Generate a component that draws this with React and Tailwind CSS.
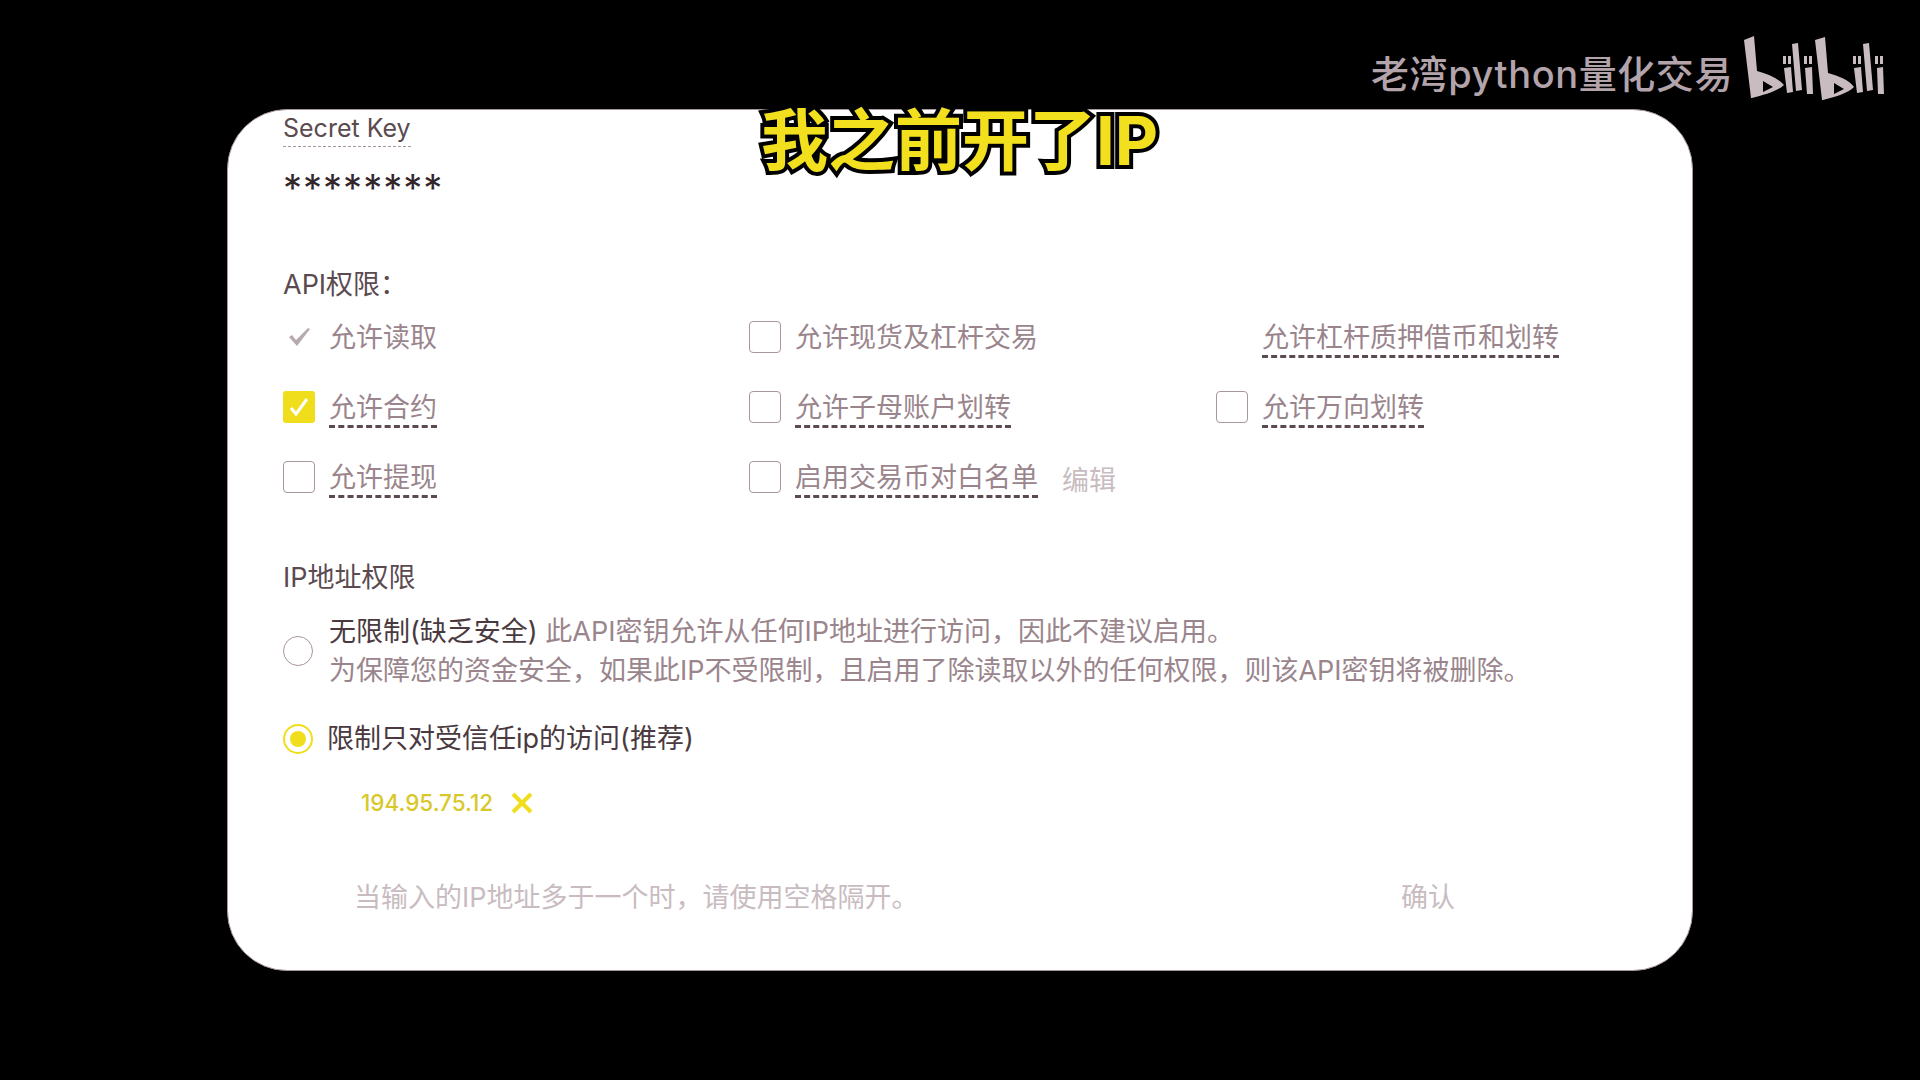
const CJK = 'font-["Inter","Noto_Sans_CJK_SC",sans-serif]';

const ROWS = [
  [
    { label: '允许读取', mark: 'tick', plain: true },
    { label: '允许现货及杠杆交易', plain: true },
    { label: '允许杠杆质押借币和划转', mark: 'none' },
  ],
  [
    { label: '允许合约', mark: 'on' },
    { label: '允许子母账户划转' },
    { label: '允许万向划转' },
  ],
  [
    { label: '允许提现' },
    { label: '启用交易币对白名单', edit: true },
  ],
];

function Mark({ mark }) {
  if (mark === 'none') return <span className="w-8 h-8 shrink-0" />;
  if (mark === 'tick') {
    return (
      <span className="w-8 h-8 shrink-0 flex items-center justify-center">
        <svg width="24" height="20" viewBox="0 0 24 20" fill="#b8a9ae">
          <path d="M2 10L5 8L9 13L21 1L23 2L10 19Z" />
        </svg>
      </span>
    );
  }
  if (mark === 'on') {
    return (
      <span className="w-8 h-8 shrink-0 rounded-[3px] bg-[#f0de1c] flex items-center justify-center">
        <svg width="20" height="20" viewBox="0 0 20 20" fill="none" stroke="#ffffff" strokeWidth="3">
          <path d="M2 11l5 6L18 2" />
        </svg>
      </span>
    );
  }
  return <span className="w-8 h-8 shrink-0 rounded-[4px] border border-[#a8969d]" />;
}

function Perm({ label, mark, plain, edit }) {
  return (
    <div className="flex items-start gap-[14px]">
      <div className="flex mt-[1px]">
        <Mark mark={mark} />
      </div>
      <span className={`mt-[1px] leading-[34px] text-[#9a858d] border-b-[3px] border-dashed ${plain ? 'border-transparent' : 'border-[#5b4a50]'}`}>
        {label}
      </span>
      {edit && <span className="ml-[10px] mt-[3px] leading-[36px] text-[#c9bcc1]">编辑</span>}
    </div>
  );
}

// bilibili wordmark, traced on a 150x75 box
function BiliLogo() {
  return (
    <svg className="absolute left-[1740px] top-[30px]" width="150" height="75" viewBox="0 0 150 75" fill="#c8bcc1">
      <path fillRule="evenodd" d="M4 10L14 6L17 41C28 44 38 48 44 55C38 61 24 65 12 68L11 68ZM23 51L23 62L33 57Z" />
      <path d="M43 26h3v8h-3zM48 26h3v8h-3zM44 38L51 37L53 62L47 63Z" />
      <path d="M52 14L58 13L62 60L56 61Z" />
      <path d="M64 26h3v8h-3zM69 26h3v8h-3zM65 38L72 37L73 64L67 64Z" />
      <path fillRule="evenodd" d="M75 10L85 7L88 43C99 46 109 50 114 57C108 63 95 67 83 70L82 70ZM94 53L94 64L104 59Z" />
      <path d="M113 26h3v8h-3zM118 26h3v8h-3zM114 38L121 37L123 62L117 63Z" />
      <path d="M123 14L129 13L133 60L127 61Z" />
      <path d="M135 26h3v8h-3zM140 26h3v8h-3zM137 38L143 37L144 64L138 64Z" />
    </svg>
  );
}

export default function App() {
  return (
    <div className={`relative w-[1920px] h-[1080px] bg-black pt-[109px] pl-[227px] overflow-hidden text-[27px] ${CJK}`}>
      {/* channel watermark */}
      <span className="absolute left-[1371px] top-[50px] text-[38px] leading-[48px] tracking-[0.6px] text-[#b3a3aa] font-medium">
        老湾python量化交易
      </span>
      <BiliLogo />

      {/* burned-in subtitle */}
      <div className="absolute left-[761px] top-[95px] text-[67px] leading-[92px] font-bold text-[#f2e01f] [-webkit-text-stroke:8px_#000] [paint-order:stroke_fill] z-10">
        我之前开了IP
      </div>

      <div className="w-[1466px] h-[862px] bg-white rounded-[60px] border border-[#a8969d] pl-[55px] flex flex-col text-[#9a858d]">
        <span className="mt-[1px] self-start text-[#5b4a50] text-[25px] leading-[34px] border-b border-dashed border-[#a8969d] pb-[1px]">
          Secret Key
        </span>
        <span className="mt-[21px] text-[#33262b] text-[38px] leading-[40px] tracking-[1px]">********</span>

        <span className="mt-[59px] text-[#5b4a50] leading-[36px]">API权限：</span>

        <div className="mt-[17px] flex flex-col gap-[31px]">
          {ROWS.map((row, i) => (
            <div key={i} className="grid grid-cols-[466px_467px_1fr] min-h-[39px]">
              {row.map((p) => <Perm key={p.label} {...p} />)}
            </div>
          ))}
        </div>

        <span className="mt-[61px] text-[#5b4a50] leading-[36px]">IP地址权限</span>

        <div className="mt-[16px] flex items-center gap-[16px]">
          <span className="w-[30px] h-[30px] rounded-full border border-[#a8969d] shrink-0" />
          <div className="leading-[39px]">
            <p><span className="text-[#4a3a40]">无限制(缺乏安全)</span> 此API密钥允许从任何IP地址进行访问，因此不建议启用。</p>
            <p>为保障您的资金安全，如果此IP不受限制，且启用了除读取以外的任何权限，则该API密钥将被删除。</p>
          </div>
        </div>

        <div className="mt-[31px] flex items-center gap-[14px] text-[#4a3a40]">
          <span className="w-[30px] h-[30px] rounded-full border-2 border-[#f0de1c] flex items-center justify-center shrink-0">
            <span className="w-[16px] h-[16px] rounded-full bg-[#f0de1c]" />
          </span>
          <span className="leading-[36px]">限制只对受信任ip的访问(推荐)</span>
        </div>

        <div className="mt-[28px] ml-[78px] flex items-center gap-[17px] text-[#d9c82a] text-[22.5px] leading-[36px] font-medium">
          <span>194.95.75.12</span>
          <svg width="24" height="22" viewBox="0 0 24 22" fill="none" stroke="#f0de1c" strokeWidth="4">
            <path d="M3 2l18 18M21 2L3 20" />
          </svg>
        </div>

        <div className="mt-[59px] ml-[71px] w-[1101px] flex justify-between text-[#c9bcc1] leading-[36px]">
          <span>当输入的IP地址多于一个时，请使用空格隔开。</span>
          <span>确认</span>
        </div>
      </div>
    </div>
  );
}
